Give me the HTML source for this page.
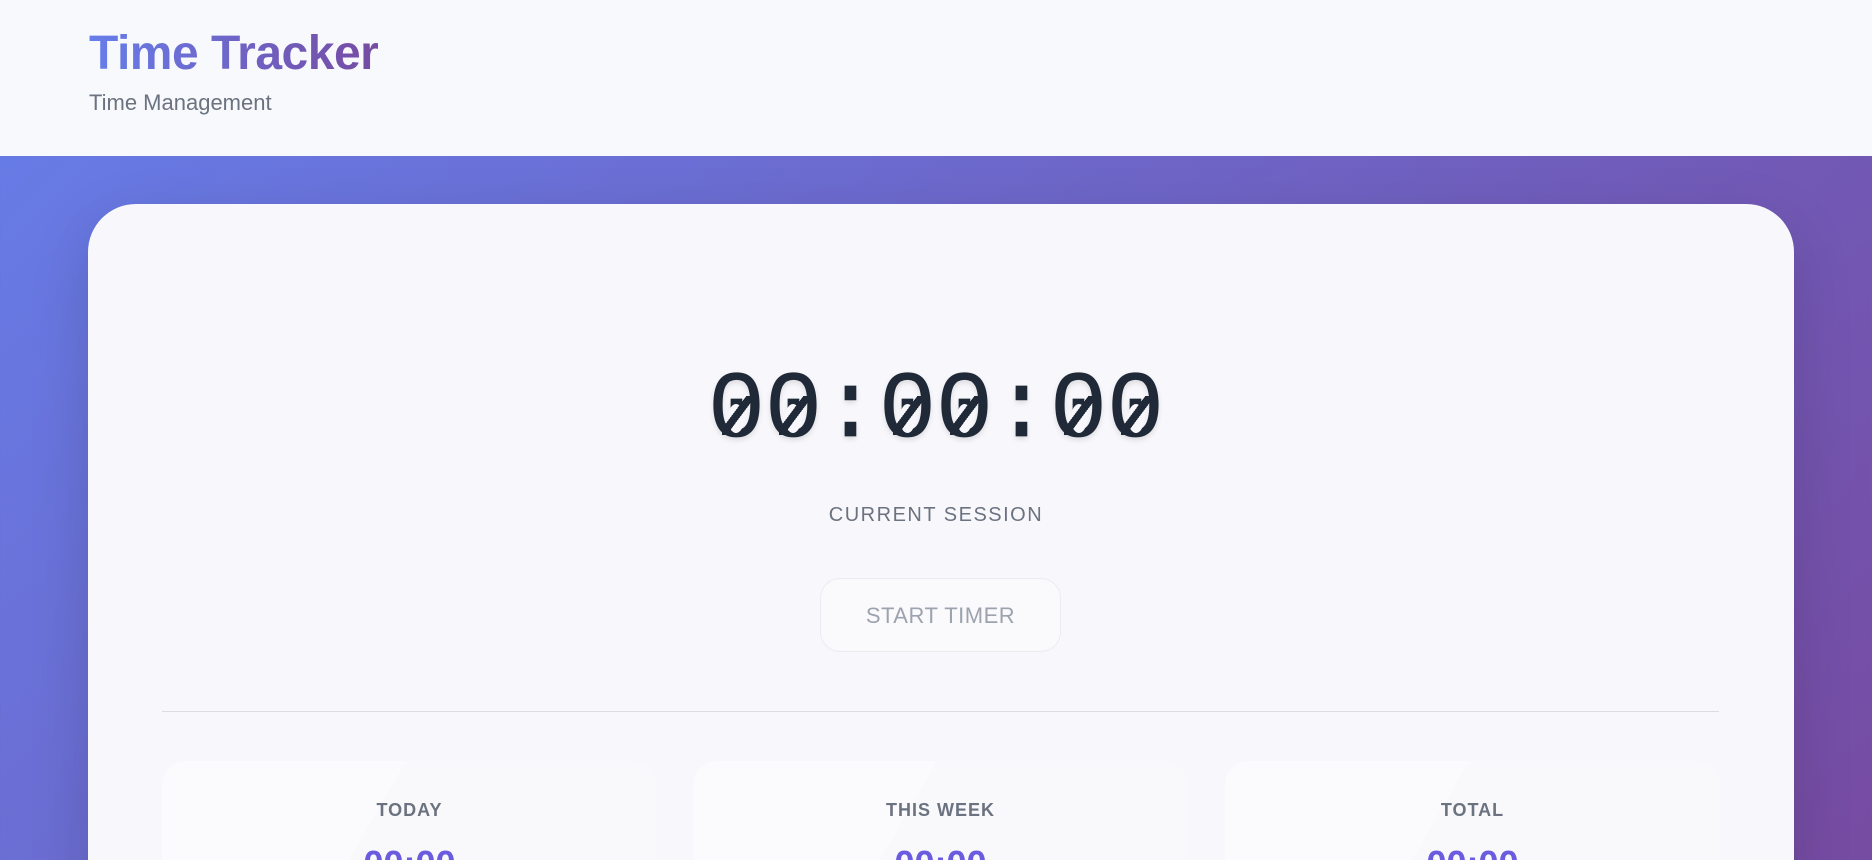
<!DOCTYPE html>
<html><head><meta charset="utf-8"><style>
*{margin:0;padding:0;box-sizing:border-box}
html,body{width:1872px;height:860px;overflow:hidden}
body{font-family:"Liberation Sans","DejaVu Sans",sans-serif;background:linear-gradient(135deg,#667eea 0%,#764ba2 100%);position:relative}
.hdr{position:absolute;left:0;top:0;width:1872px;height:156px;background:#f8f9fd}
.title{position:absolute;left:89px;top:26px;font-size:48px;font-weight:700;background:linear-gradient(90deg,#667eea,#764ba2);-webkit-background-clip:text;background-clip:text;color:transparent;letter-spacing:-0.5px}
.sub{position:absolute;left:89px;top:90px;font-size:22px;color:#6b7280}
.card{position:absolute;left:88px;top:204px;width:1706px;height:800px;background:#f8f8fc;border-radius:48px;box-shadow:0 20px 60px rgba(0,0,0,.15)}
.timer{position:absolute;left:0;width:1872px;top:356px;text-align:center;font-family:"Liberation Mono",monospace;font-size:95px;color:#1f2937;line-height:110px;text-shadow:0 3px 6px rgba(0,0,0,.12);-webkit-text-stroke:0.8px #1f2937}
.z{position:relative;display:inline-block}
.z::before{content:"";position:absolute;left:36%;width:28%;top:44%;height:26%;background:#f8f8fc;border-radius:50%}
.z::after{content:"";position:absolute;left:24%;right:24%;top:36%;bottom:28%;background:linear-gradient(to bottom right,transparent 42%,#1f2937 42%,#1f2937 58%,transparent 58%)}
.cs{position:absolute;left:0;width:1872px;top:504px;text-align:center;font-size:20px;letter-spacing:1.5px;color:#6b7280}
.btn{position:absolute;left:820px;top:578px;width:241px;height:74px;border:1px solid #ebebf2;border-radius:20px;background:#fafafd;text-align:center;line-height:74px;font-size:22px;color:#9ca3af;letter-spacing:.5px}
.div{position:absolute;left:162px;top:711px;width:1557px;height:1px;background:#dcdce3}
.st{position:absolute;top:761px;width:495px;height:200px;border-radius:24px;background:linear-gradient(120deg,#fbfbfe 0%,#fbfbfe 40%,#f9f9fc 40%)}
.st .l{position:absolute;top:39px;width:100%;text-align:center;font-size:18px;font-weight:700;color:#6b7280;letter-spacing:1px}
.st .v{position:absolute;top:82px;width:100%;text-align:center;font-size:36px;font-weight:700;color:#6a5bdf}
</style></head><body>
<div class="hdr"><div class="title">Time Tracker</div><div class="sub">Time Management</div></div>
<div class="card"></div>
<div class="timer"><span class="z">0</span><span class="z">0</span>:<span class="z">0</span><span class="z">0</span>:<span class="z">0</span><span class="z">0</span></div>
<div class="cs">CURRENT SESSION</div>
<div class="btn">START TIMER</div>
<div class="div"></div>
<div class="st" style="left:162px"><div class="l">TODAY</div><div class="v">00:00</div></div>
<div class="st" style="left:693px"><div class="l">THIS WEEK</div><div class="v">00:00</div></div>
<div class="st" style="left:1225px"><div class="l">TOTAL</div><div class="v">00:00</div></div>
</body></html>
